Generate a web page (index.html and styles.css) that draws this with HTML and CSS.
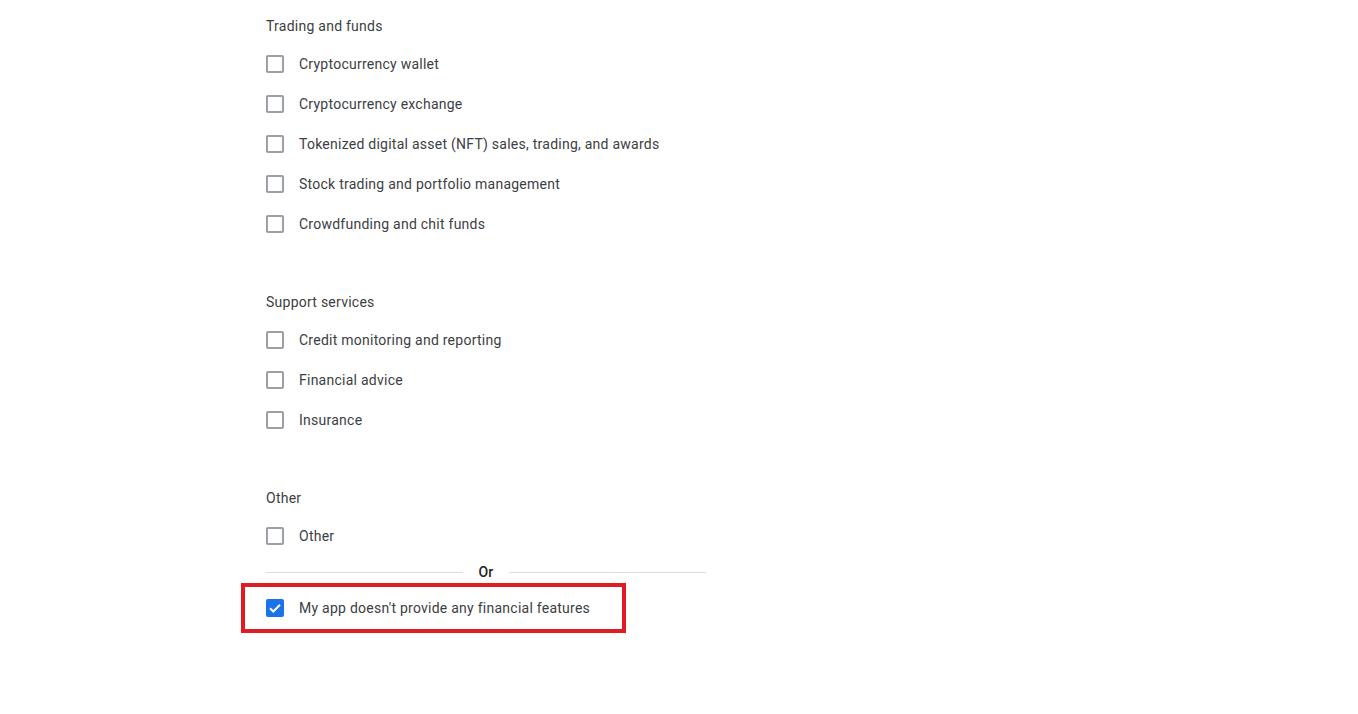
FILE: index.html
```html
<!DOCTYPE html>
<html lang="en">
<head>
<meta charset="utf-8">
<title>Financial features</title>
<link rel="stylesheet" href="styles.css">
</head>
<body>
<main class="page">
  <section class="group">
    <h3 class="group-title">Trading and funds</h3>
    <ul class="options">
      <li class="option"><span class="box"></span><span class="label">Cryptocurrency wallet</span></li>
      <li class="option"><span class="box"></span><span class="label">Cryptocurrency exchange</span></li>
      <li class="option"><span class="box"></span><span class="label">Tokenized digital asset (NFT) sales, trading, and awards</span></li>
      <li class="option"><span class="box"></span><span class="label">Stock trading and portfolio management</span></li>
      <li class="option"><span class="box"></span><span class="label">Crowdfunding and chit funds</span></li>
    </ul>
  </section>
  <section class="group">
    <h3 class="group-title">Support services</h3>
    <ul class="options">
      <li class="option"><span class="box"></span><span class="label">Credit monitoring and reporting</span></li>
      <li class="option"><span class="box"></span><span class="label">Financial advice</span></li>
      <li class="option"><span class="box"></span><span class="label">Insurance</span></li>
    </ul>
  </section>
  <section class="group">
    <h3 class="group-title">Other</h3>
    <ul class="options">
      <li class="option"><span class="box"></span><span class="label">Other</span></li>
    </ul>
  </section>
  <div class="divider"><span class="line"></span><span class="or">Or</span><span class="line"></span></div>
  <div class="highlight">
    <div class="option">
      <span class="box checked">
        <svg viewBox="0 0 18 18" width="18" height="18"><path d="M4 9.2l3.3 3.3L14 5.8" fill="none" stroke="#fff" stroke-width="2"/></svg>
      </span>
      <span class="label">My app doesn't provide any financial features</span>
    </div>
  </div>
</main>
</body>
</html>
```
FILE: styles.css
```css
* { box-sizing: border-box; }
html, body { margin: 0; padding: 0; background: #fff; }
body {
  font-family: Roboto, "Liberation Sans", Arial, sans-serif;
  font-size: 14px;
  line-height: 20px;
  color: #3c4043;
  letter-spacing: 0.25px;
}
.page {
  padding: 16px 0 0 266px;
  width: 706px;
}
.group { margin-bottom: 48px; }
.group:last-of-type { margin-bottom: 6px; }
.group-title {
  margin: 0 0 8px 0;
  font-size: 14px;
  font-weight: 400;
  line-height: 20px;
  color: #3c4043;
}
.options { list-style: none; margin: 0; padding: 0; }
.option {
  display: flex;
  align-items: center;
  height: 40px;
}
.box {
  width: 18px;
  height: 18px;
  border: 2px solid #9aa0a6;
  border-radius: 2px;
  flex: none;
  display: flex;
  align-items: center;
  justify-content: center;
}
.box.checked {
  background: #1a73e8;
  border-color: #1a73e8;
}
.box.checked svg { flex: none; margin: -2px; }
.label { margin-left: 15px; }
.divider {
  display: flex;
  align-items: center;
  height: 20px;
  margin-top: 1px;
}
.divider .line { flex: 1; height: 1px; background: #dadce0; }
.divider .or {
  padding: 0 15px;
  font-weight: 500;
  color: #202124;
}
.highlight {
  margin: 1px 0 0 -25px;
  width: 385px;
  height: 50px;
  border: 4px solid #e01b22;
  padding-left: 21px;
  display: flex;
  align-items: center;
}
.highlight .option { height: auto; }
```
